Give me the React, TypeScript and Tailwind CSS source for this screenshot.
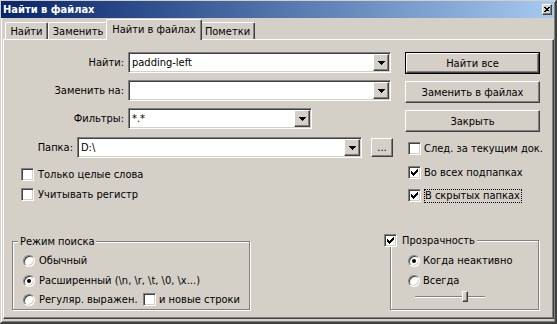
import type { ReactNode } from "react";

const raised =
  "border border-t-white border-l-white border-r-[#404040] border-b-[#404040] shadow-[inset_-1px_-1px_0_#808080]";
const sunken =
  "border border-t-[#808080] border-l-[#808080] border-r-white border-b-white shadow-[inset_1px_1px_0_#404040,inset_-1px_-1px_0_#d4d0c8]";
const etched = "border border-[#808080] shadow-[1px_1px_0_#fff,inset_1px_1px_0_#fff]";

const Arrow = () => (
  <svg width="7" height="4" viewBox="0 0 7 4" shapeRendering="crispEdges">
    <path d="M0 0h7v1H0z M1 1h5v1H1z M2 2h3v1H2z M3 3h1v1H3z" fill="#000" />
  </svg>
);

const Combo = ({ value, className }: { value?: string; className: string }) => (
  <div className={`flex h-[21px] bg-white p-[1px] ${sunken} ${className}`}>
    <div className="flex flex-1 items-center pl-[2px]">{value}</div>
    <div className={`flex w-[16px] items-center justify-center bg-[#d4d0c8] ${raised}`}>
      <Arrow />
    </div>
  </div>
);

const Check = ({ checked }: { checked?: boolean }) => (
  <div className={`flex h-[13px] w-[13px] shrink-0 items-center justify-center bg-white ${sunken}`}>
    {checked && (
      <svg width="7" height="7" viewBox="0 0 7 7" shapeRendering="crispEdges">
        <path
          d="M0 2h1v3H0z M1 3h1v3H1z M2 4h1v3H2z M3 3h1v3H3z M4 2h1v3H4z M5 1h1v3H5z M6 0h1v3H6z"
          fill="#000"
        />
      </svg>
    )}
  </div>
);

const Radio = ({ checked }: { checked?: boolean }) => (
  <div className="flex h-[12px] w-[12px] shrink-0 items-center justify-center rounded-full border border-t-[#808080] border-l-[#808080] border-r-white border-b-white bg-white shadow-[inset_1px_1px_0_#404040,inset_-1px_-1px_0_#d4d0c8]">
    {checked && <div className="h-[4px] w-[4px] rounded-full bg-black" />}
  </div>
);

const Button = ({ children, isDefault }: { children: ReactNode; isDefault?: boolean }) =>
  isDefault ? (
    <div className="h-[22px] w-[135px] border border-black">
      <div className={`flex h-full items-center justify-center ${raised}`}>{children}</div>
    </div>
  ) : (
    <div className={`flex h-[22px] w-[135px] items-center justify-center ${raised}`}>{children}</div>
  );

const Tab = ({ label, className }: { label: string; className: string }) => (
  <div
    className={`flex h-[17px] items-center justify-center rounded-t-[2px] border-l border-t border-r border-l-white border-t-white border-r-[#404040] pt-[1px] shadow-[inset_-1px_0_0_#808080] ${className}`}
  >
    {label}
  </div>
);

export default function App() {
  return (
    <div className="h-[324px] w-[557px] overflow-hidden bg-[#d4d0c8] font-['DejaVu_Sans_Condensed','Liberation_Sans',sans-serif] text-[11px] leading-[13px] text-black">
      <div className="flex h-[324px] w-[557px] flex-col border-l border-t border-r-2 border-b-2 border-l-[#d4d0c8] border-t-[#d4d0c8] border-r-[#404040] border-b-[#404040] shadow-[inset_1px_1px_0_#fff,inset_-1px_-1px_0_#808080]">
        {/* title bar */}
        <div className="mr-[1px] flex h-[17px] items-center justify-between bg-linear-to-r from-[#0a246a] to-[#a6caf0] pl-[2px] pr-[2px]">
          <span className="font-bold text-white">Найти в файлах</span>
          <div className={`flex h-[11px] w-[10px] items-center justify-center bg-[#d4d0c8] ${raised}`}>
            <svg width="6" height="5" viewBox="0 0 6 5" shapeRendering="crispEdges">
              <path d="M0 0h2v1H0z M4 0h2v1H4z M1 1h4v1H1z M2 2h2v1H2z M1 3h4v1H1z M0 4h2v1H0z" fill="#000" />
            </svg>
          </div>
        </div>

        {/* tabs */}
        <div className="ml-[2px] mt-[1px] flex h-[20px] items-end pl-[2px]">
          <Tab label="Найти" className="w-[43px]" />
          <Tab label="Заменить" className="w-[60px]" />
          <div className="relative z-10 -mx-[2px] -mb-[1px] flex h-[21px] w-[96px] items-start justify-center rounded-t-[2px] border-l border-t border-r border-l-white border-t-white border-r-[#404040] bg-[#d4d0c8] pt-[3px] shadow-[inset_-1px_0_0_#808080]">
            Найти в файлах
          </div>
          <Tab label="Пометки" className="w-[55px]" />
        </div>

        {/* panel */}
        <div className="ml-[2px] mr-[1px] flex h-[280px] flex-col border border-l-white border-t-white border-r-[#404040] border-b-[#404040] shadow-[inset_-1px_-1px_0_#808080]">
          <div className="flex pt-[12px]">
            {/* left column */}
            <div className="flex w-[401px] flex-col">
              <div className="flex h-[21px] items-center">
                <span className="w-[120px] text-right">Найти:</span>
                <Combo className="ml-[4px] w-[263px]" value="padding-left" />
              </div>
              <div className="mt-[7px] flex h-[21px] items-center">
                <span className="w-[120px] text-right">Заменить на:</span>
                <Combo className="ml-[4px] w-[263px]" />
              </div>
              <div className="mt-[7px] flex h-[21px] items-center">
                <span className="w-[120px] text-right">Фильтры:</span>
                <Combo className="ml-[4px] w-[184px]" value="*.*" />
              </div>
              <div className="mt-[8px] flex h-[21px] items-center">
                <span className="w-[69px] text-right">Папка:</span>
                <Combo className="ml-[4px] w-[285px]" value="D:\" />
                <div className={`ml-[9px] flex h-[19px] w-[22px] items-center justify-center pb-[1px] ${raised}`}>
                  ...
                </div>
              </div>
              <div className="ml-[17px] mt-[10px] flex h-[13px] items-center gap-[4px]">
                <Check />
                <span>Только целые слова</span>
              </div>
              <div className="ml-[17px] mt-[7px] flex h-[13px] items-center gap-[4px]">
                <Check />
                <span>Учитывать регистр</span>
              </div>
            </div>

            {/* right column */}
            <div className="flex flex-col items-start">
              <Button isDefault>Найти все</Button>
              <div className="mt-[7px]">
                <Button>Заменить в файлах</Button>
              </div>
              <div className="mt-[7px]">
                <Button>Закрыть</Button>
              </div>
              <div className="ml-[3px] mt-[10px] flex h-[13px] items-center gap-[3px]">
                <Check />
                <span>След. за текущим док.</span>
              </div>
              <div className="ml-[3px] mt-[11px] flex h-[13px] items-center gap-[3px]">
                <Check checked />
                <span>Во всех подпапках</span>
              </div>
              <div className="ml-[3px] mt-[10px] flex h-[13px] items-center gap-[3px]">
                <Check checked />
                <span className="border border-dotted border-black pr-[1px] leading-[12px]">В скрытых папках</span>
              </div>
            </div>
          </div>

          {/* group boxes */}
          <div className="mb-[8px] mt-auto flex items-end">
            <div className={`relative ml-[8px] h-[69px] w-[238px] pl-[10px] pt-[12px] ${etched}`}>
              <span className="absolute left-[5px] top-[-7px] bg-[#d4d0c8] px-[2px]">Режим поиска</span>
              <div className="flex h-[13px] items-center gap-[4px]">
                <Radio />
                <span>Обычный</span>
              </div>
              <div className="mt-[7px] flex h-[13px] items-center gap-[4px]">
                <Radio checked />
                <span>Расширенный (\n, \r, \t, \0, \x...)</span>
              </div>
              <div className="mt-[6px] flex h-[13px] items-center">
                <Radio />
                <span className="ml-[4px] w-[104px]">Регуляр. выражен.</span>
                <Check />
                <span className="ml-[3px]">и новые строки</span>
              </div>
            </div>

            <div className={`relative ml-[140px] h-[70px] w-[149px] pl-[17px] pt-[13px] ${etched}`}>
              <div className="absolute left-[-7px] top-[-7px] flex items-center gap-[5px] bg-[#d4d0c8] pr-[2px]">
                <Check checked />
                <span>Прозрачность</span>
              </div>
              <div className="flex h-[13px] items-center gap-[3px]">
                <Radio checked />
                <span>Когда неактивно</span>
              </div>
              <div className="mt-[7px] flex h-[13px] items-center gap-[3px]">
                <Radio />
                <span>Всегда</span>
              </div>
              <div className="relative ml-[7px] mt-[4px] h-[11px] w-[70px]">
                <div className="absolute left-0 right-0 top-[5px] h-[2px] border-t border-b border-t-[#808080] border-b-white" />
                <div className={`absolute left-[47px] top-0 h-[11px] w-[6px] bg-[#d4d0c8] ${raised}`} />
              </div>
            </div>
          </div>
        </div>
      </div>
    </div>
  );
}
